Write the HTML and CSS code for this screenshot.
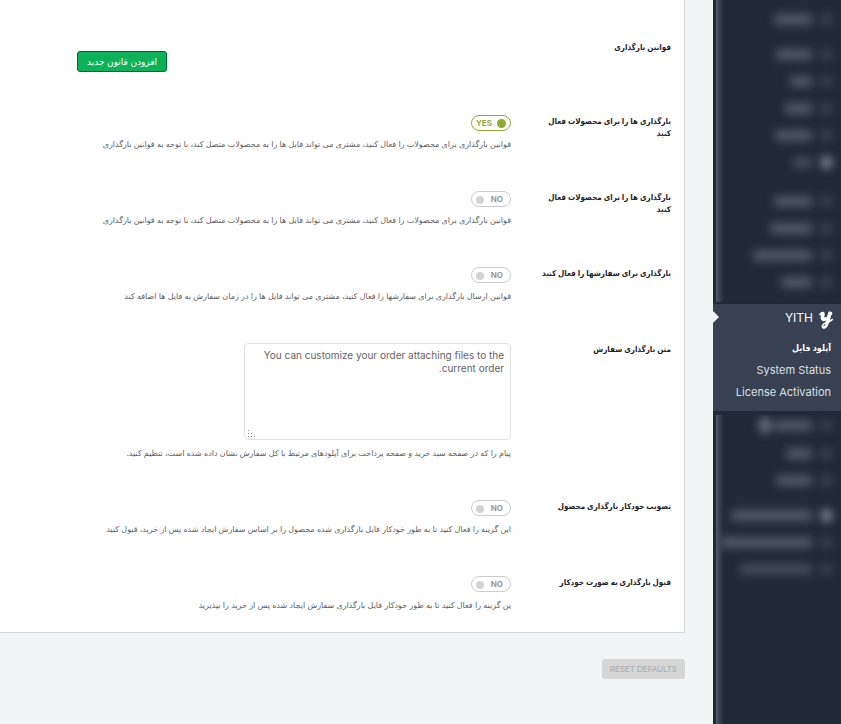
FILE: index.html
```
<!DOCTYPE html>
<html lang="fa" dir="rtl">
<head>
<meta charset="utf-8">
<meta name="viewport" content="width=device-width, initial-scale=1">
<title>آپلود فایل</title>
<link rel="stylesheet" href="styles.css">
</head>
<body>
<div class="app">
  <aside class="sidebar">
    <div class="veil" aria-hidden="true">
      <div class="ghost"><i></i><b style="width:38px"></b></div>
      <div class="ghost gap"><i></i><b style="width:36px"></b></div>
      <div class="ghost"><i></i><b style="width:22px"></b></div>
      <div class="ghost"><i></i><b style="width:27px"></b></div>
      <div class="ghost"><i></i><b style="width:37px"></b></div>
      <div class="ghost bright"><i></i><b class="dim" style="width:19px"></b></div>
      <div class="ghost gap wide"><i></i><b style="width:38px"></b></div>
      <div class="ghost"><i></i><b style="width:42px"></b></div>
      <div class="ghost"><i></i><b style="width:59px"></b></div>
      <div class="ghost"><i></i><b style="width:31px"></b></div>
    </div>
    <nav class="current">
      <a class="brand" href="#">
        <svg class="logo" viewBox="0 0 14 18" fill="none" stroke="currentColor" stroke-linecap="round" stroke-linejoin="round"><path stroke-width="1.6" d="M1 3.6C1.8 2 3 1.4 4.2 1.6"/><path stroke-width="3.6" d="M4 2.8L3.4 6.4C3.1 8.4 4.6 8.8 6.2 8"/><path stroke-width="1.6" d="M6.2 8.6C7.6 7.8 8.6 6.6 9.2 5"/><path stroke-width="3.6" d="M10.8 2.4L8.6 11"/><path stroke-width="2.8" d="M8.6 11C7.8 14.6 6.6 16.4 5 16.4"/><path stroke-width="1.6" d="M5 16.8C2.4 16.6 3 13.4 6.4 12C9.2 10.9 11.4 10.4 13.2 8.6M10.8 1.6C12 1.2 12.8 1.8 12.4 3"/></svg>
        <span>YITH</span>
      </a>
      <a class="sub active" href="#">آپلود فایل</a>
      <a class="sub" href="#">System Status</a>
      <a class="sub" href="#">License Activation</a>
    </nav>
    <div class="veil last" aria-hidden="true">
      <div class="ghost short"><i></i><b style="width:38px"></b><u></u></div>
      <div class="ghost"><i></i><b style="width:26px"></b></div>
      <div class="ghost"><i></i><b style="width:36px"></b></div>
      <div class="ghost gap bright"><i></i><b style="width:81px"></b></div>
      <div class="ghost"><i></i><b style="width:92px"></b></div>
      <div class="ghost"><i></i><b class="dim" style="width:72px"></b></div>
    </div>
  </aside>

  <main class="content">
    <form class="panel">
      <div class="row rules">
        <span class="label">قوانین بارگذاری</span>
        <div class="field"><button class="add" type="button">افزودن قانون جدید</button></div>
      </div>
      <div class="row">
        <label class="label" for="o1">بارگذاری ها را برای محصولات فعال کنید</label>
        <div class="field">
          <label class="toggle on"><input id="o1" type="checkbox" checked><span>YES</span></label>
          <p>قوانین بارگذاری برای محصولات را فعال کنید، مشتری می تواند فایل ها را به محصولات متصل کند، با توجه به قوانین بارگذاری</p>
        </div>
      </div>
      <div class="row">
        <label class="label" for="o2">بارگذاری ها را برای محصولات فعال کنید</label>
        <div class="field">
          <label class="toggle"><input id="o2" type="checkbox"><span>NO</span></label>
          <p>قوانین بارگذاری برای محصولات را فعال کنید، مشتری می تواند فایل ها را به محصولات متصل کند، با توجه به قوانین بارگذاری</p>
        </div>
      </div>
      <div class="row">
        <label class="label" for="o3">بارگذاری برای سفارشها را فعال کنید</label>
        <div class="field">
          <label class="toggle"><input id="o3" type="checkbox"><span>NO</span></label>
          <p>قوانین ارسال بارگذاری برای سفارشها را فعال کنید، مشتری می تواند فایل ها را در زمان سفارش به فایل ها اضافه کند</p>
        </div>
      </div>
      <div class="row message">
        <label class="label" for="o4">متن بارگذاری سفارش</label>
        <div class="field">
          <div class="box">
            <textarea id="o4">You can customize your order attaching files to the current order.</textarea>
            <svg class="grip" viewBox="0 0 8 8" aria-hidden="true"><path d="M0 0h1v1H0zM0 3h1v1H0zM3 3h1v1H3zM0 6h1v1H0zM3 6h1v1H3zM6 6h1v1H6z"/></svg>
          </div>
          <p>پیام را که در صفحه سبد خرید و صفحه پرداخت برای آپلودهای مرتبط با کل سفارش نشان داده شده است، تنظیم کنید.</p>
        </div>
      </div>
      <div class="row">
        <label class="label" for="o5">تصویب خودکار بارگذاری محصول</label>
        <div class="field">
          <label class="toggle"><input id="o5" type="checkbox"><span>NO</span></label>
          <p>این گزینه را فعال کنید تا به طور خودکار فایل بارگذاری شده محصول را بر اساس سفارش ایجاد شده پس از خرید، قبول کنید</p>
        </div>
      </div>
      <div class="row">
        <label class="label" for="o6">قبول بارگذاری به صورت خودکار</label>
        <div class="field">
          <label class="toggle"><input id="o6" type="checkbox"><span>NO</span></label>
          <p>ین گزینه را فعال کنید تا به طور خودکار فایل بارگذاری سفارش ایجاد شده پس از خرید را بپذیرید</p>
        </div>
      </div>
    </form>
    <button class="reset" type="button">RESET DEFAULTS</button>
  </main>
</div>
</body>
</html>
```
FILE: styles.css
```
* { box-sizing: border-box; }
body {
  margin: 0;
  background: #f3f4f6;
  color: #1d2327;
  font-family: Inter, "DejaVu Sans", sans-serif;
  font-size: 8px;
  line-height: 12px;
}
button, textarea { font: inherit; }
.app { display: flex; min-height: 100vh; }

.sidebar {
  display: flex;
  flex-direction: column;
  flex: 0 0 128px;
  background: #1f2937;
}
.veil {
  margin-left: 3px;
  padding: 6px 8px 6px 0;
  overflow: hidden;
  background: linear-gradient(to right, #56606b 0, #3b4551 3px, #212b38 8px);
}
.veil.last { flex: 1; padding-top: 0; }
.ghost {
  display: flex;
  align-items: center;
  gap: 8px;
  height: 27px;
  filter: blur(4px);
}
.ghost.gap { margin-top: 8px; }
.ghost.wide { margin-top: 12px; }
.ghost.short { height: 21px; margin-bottom: 4px; }
.ghost i { flex: none; width: 13px; height: 13px; border-radius: 6px; background: #35404c; }
.ghost.bright i { background: #727b85; }
.ghost b { flex: none; height: 11px; border-radius: 4px; background: #4d5863; }
.ghost b.dim { background: #414c58; }
.ghost u { flex: none; width: 12px; height: 15px; margin-right: -5px; border-radius: 5px; background: #66707a; }

.current {
  position: relative;
  margin: 2px 0 4px;
  padding: 2px 10px 8px 0;
  background: #374151;
  font-size: 11px;
}
.current::before {
  content: "";
  position: absolute;
  top: 7px;
  left: 0;
  border: 6px solid transparent;
  border-left-color: #f3f4f6;
  border-right-width: 0;
}
.current a { display: flex; align-items: center; color: #dde0e4; text-decoration: none; }
.current .brand { gap: 6px; height: 24px; margin: 0 -2px 7px 0; font-size: 12px; color: #fff; }
.logo { width: 14px; height: 18px; margin-top: 4px; }
.current .sub { height: 22px; }
.current .active {
  color: #fff;
  font-family: Inter, "DejaVu Sans Condensed", "DejaVu Sans", sans-serif;
  font-weight: bold;
  font-size: 9px;
}

.content { flex: 1; min-width: 0; padding-right: 28px; }
.panel {
  padding: 41px 13px 21px;
  border: solid #d4d6d9;
  border-width: 0 1px 1px 0;
  background: #fff;
}
.row { display: flex; gap: 25px; min-height: 76px; }
.row.rules { min-height: 74px; }
.row.message { min-height: 157px; }
.row:last-child { min-height: 0; }
.label {
  flex: 0 0 135px;
  font-family: Inter, "DejaVu Sans Condensed", "DejaVu Sans", sans-serif;
  font-weight: bold;
}
.field { flex: 1; min-width: 0; }
.field p { margin: 7px 0 0; color: #5e5e5e; }
.rules .field { display: flex; justify-content: flex-end; align-items: flex-start; padding: 10px 0 0 64px; }
.add {
  height: 21px;
  padding: 0 9px;
  border: 1px solid #08622f;
  border-radius: 3px;
  background: #0cb159;
  color: #fff;
  font-size: 9px;
}
.toggle {
  display: flex;
  flex-direction: row-reverse;
  justify-content: space-between;
  align-items: center;
  width: 40px;
  height: 16px;
  padding: 0 7px 0 4px;
  border: 1px solid #ccc;
  border-radius: 8px;
  color: #999;
  font-weight: bold;
}
.toggle.on { flex-direction: row; padding: 0 4px; border-color: #94aa37; color: #94aa37; }
.toggle input { appearance: none; width: 8px; height: 8px; margin: 1px 0 0; border-radius: 50%; background: #d3d3d3; }
.toggle.on input { width: 9px; height: 9px; background: #94aa37; }
.box { position: relative; width: 267px; max-width: 100%; height: 97px; }
textarea {
  display: block;
  width: 100%;
  height: 100%;
  padding: 5px 6px;
  border: 1px solid #e0e0e0;
  border-radius: 5px;
  background: #fff;
  color: #646464;
  font-size: 10px;
  line-height: 13px;
  resize: none;
}
.grip { position: absolute; left: 4px; bottom: 2px; width: 8px; height: 8px; fill: #888; }
.reset {
  display: block;
  height: 20px;
  margin-top: 26px;
  padding: 0 8px;
  border: 0;
  border-radius: 3px;
  background: #d6d6d6;
  color: #aaa;
}
```
